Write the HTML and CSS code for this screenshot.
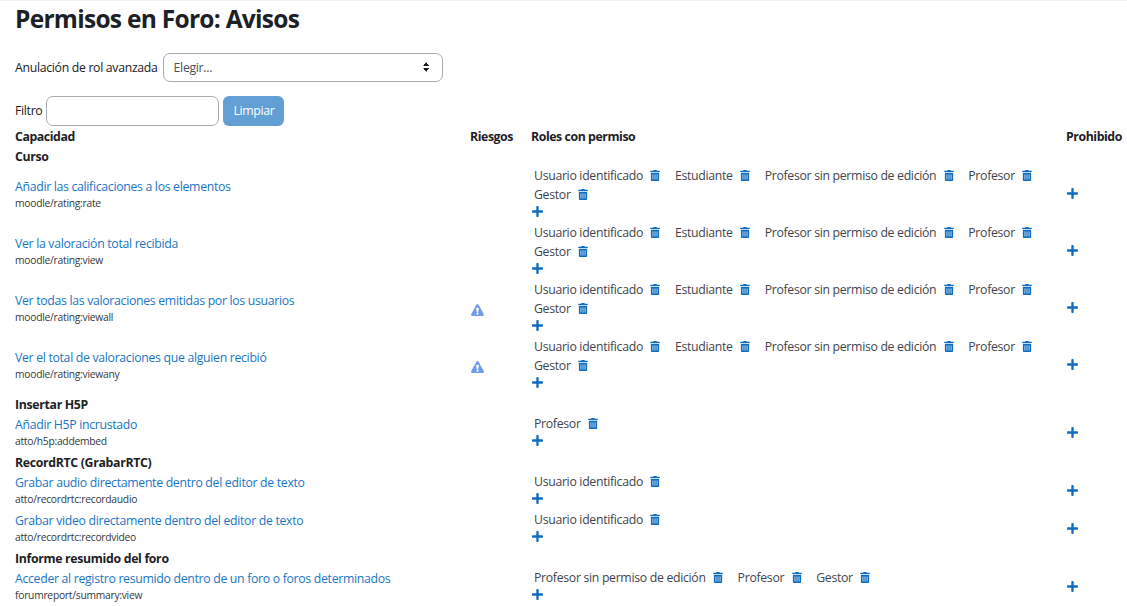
FILE: index.html
```html
<!DOCTYPE html>
<html lang="es">
<head>
<meta charset="utf-8">
<title>Permisos en Foro: Avisos</title>
<link rel="stylesheet" href="styles.css">
</head>
<body>
<svg class="defs" width="0" height="0" aria-hidden="true">
  <symbol id="i-trash" viewBox="0 0 448 512"><path d="M32 464a48 48 0 0 0 48 48h288a48 48 0 0 0 48-48V128H32zm272-256a16 16 0 0 1 32 0v224a16 16 0 0 1-32 0zm-96 0a16 16 0 0 1 32 0v224a16 16 0 0 1-32 0zm-96 0a16 16 0 0 1 32 0v224a16 16 0 0 1-32 0zM432 32H312l-9.4-18.7A24 24 0 0 0 281.1 0H166.8a23.72 23.72 0 0 0-21.4 13.3L136 32H16A16 16 0 0 0 0 48v32a16 16 0 0 0 16 16h416a16 16 0 0 0 16-16V48a16 16 0 0 0-16-16z"/></symbol>
  <symbol id="i-plus" viewBox="0 0 448 512"><path d="M416 208H272V64c0-17.67-14.33-32-32-32h-32c-17.67 0-32 14.33-32 32v144H32c-17.67 0-32 14.33-32 32v32c0 17.67 14.33 32 32 32h144v144c0 17.67 14.33 32 32 32h32c17.67 0 32-14.33 32-32V304h144c17.67 0 32-14.33 32-32v-32c0-17.67-14.33-32-32-32z"/></symbol>
  <symbol id="i-risk" viewBox="0 0 24 22"><path fill-rule="evenodd" d="M12 0c.8 0 1.400.4 1.800 1l9.900 18c.7 1.300-.1 3-1.800 3H2.100C.4 22-.4 20.300.3 19l9.900-18C10.600.4 11.200 0 12 0zM9.500 8.500l1.200 6.500h2.600l1.200-6.500c.1-.8-.5-1.500-1.300-1.500h-2.400c-.8 0-1.400.7-1.300 1.500zM12 15.800a1.900 1.900 0 1 0 0 3.800 1.900 1.900 0 0 0 0-3.800z"/></symbol>
</svg>
<main class="page">
  <h1 class="title">Permisos en Foro: Avisos</h1>
  <form class="override">
    <label class="override-label">Anulación de rol avanzada</label>
    <div class="select"><span class="select-text">Elegir...</span><span class="carets"></span></div>
  </form>
  <div class="filter">
    <label class="filter-label">Filtro</label>
    <div class="filter-input"></div>
    <button class="btn" type="button">Limpiar</button>
  </div>
  <table class="caps">
    <colgroup><col class="c1"><col class="c2"><col class="c3"><col class="c4"></colgroup>
    <thead>
      <tr class="head"><th>Capacidad</th><th>Riesgos</th><th>Roles con permiso</th><th>Prohibido</th></tr>
    </thead>
    <tbody>
      <tr class="group"><td colspan="4">Curso</td></tr>
      <tr class="row-l">
        <td class="cap"><a href="#">Añadir las calificaciones a los elementos</a><small>moodle/rating:rate</small></td>
        <td></td>
        <td><ul class="roles">
          <li>Usuario identificado<svg class="trash"><use href="#i-trash"/></svg></li><li>Estudiante<svg class="trash"><use href="#i-trash"/></svg></li><li>Profesor sin permiso de edición<svg class="trash"><use href="#i-trash"/></svg></li><li>Profesor<svg class="trash"><use href="#i-trash"/></svg></li><li>Gestor<svg class="trash"><use href="#i-trash"/></svg></li>
        </ul><svg class="plus"><use href="#i-plus"/></svg></td>
        <td class="proh"><svg class="plus"><use href="#i-plus"/></svg></td>
      </tr>
      <tr class="row-l">
        <td class="cap"><a href="#">Ver la valoración total recibida</a><small>moodle/rating:view</small></td>
        <td></td>
        <td><ul class="roles">
          <li>Usuario identificado<svg class="trash"><use href="#i-trash"/></svg></li><li>Estudiante<svg class="trash"><use href="#i-trash"/></svg></li><li>Profesor sin permiso de edición<svg class="trash"><use href="#i-trash"/></svg></li><li>Profesor<svg class="trash"><use href="#i-trash"/></svg></li><li>Gestor<svg class="trash"><use href="#i-trash"/></svg></li>
        </ul><svg class="plus"><use href="#i-plus"/></svg></td>
        <td class="proh"><svg class="plus"><use href="#i-plus"/></svg></td>
      </tr>
      <tr class="row-l">
        <td class="cap"><a href="#">Ver todas las valoraciones emitidas por los usuarios</a><small>moodle/rating:viewall</small></td>
        <td class="risk"><svg class="risk-icon"><use href="#i-risk"/></svg></td>
        <td><ul class="roles">
          <li>Usuario identificado<svg class="trash"><use href="#i-trash"/></svg></li><li>Estudiante<svg class="trash"><use href="#i-trash"/></svg></li><li>Profesor sin permiso de edición<svg class="trash"><use href="#i-trash"/></svg></li><li>Profesor<svg class="trash"><use href="#i-trash"/></svg></li><li>Gestor<svg class="trash"><use href="#i-trash"/></svg></li>
        </ul><svg class="plus"><use href="#i-plus"/></svg></td>
        <td class="proh"><svg class="plus"><use href="#i-plus"/></svg></td>
      </tr>
      <tr class="row-l">
        <td class="cap"><a href="#">Ver el total de valoraciones que alguien recibió</a><small>moodle/rating:viewany</small></td>
        <td class="risk"><svg class="risk-icon"><use href="#i-risk"/></svg></td>
        <td><ul class="roles">
          <li>Usuario identificado<svg class="trash"><use href="#i-trash"/></svg></li><li>Estudiante<svg class="trash"><use href="#i-trash"/></svg></li><li>Profesor sin permiso de edición<svg class="trash"><use href="#i-trash"/></svg></li><li>Profesor<svg class="trash"><use href="#i-trash"/></svg></li><li>Gestor<svg class="trash"><use href="#i-trash"/></svg></li>
        </ul><svg class="plus"><use href="#i-plus"/></svg></td>
        <td class="proh"><svg class="plus"><use href="#i-plus"/></svg></td>
      </tr>
      <tr class="group"><td colspan="4">Insertar H5P</td></tr>
      <tr class="row-s">
        <td class="cap"><a href="#">Añadir H5P incrustado</a><small>atto/h5p:addembed</small></td>
        <td></td>
        <td><ul class="roles"><li>Profesor<svg class="trash"><use href="#i-trash"/></svg></li></ul><svg class="plus"><use href="#i-plus"/></svg></td>
        <td class="proh"><svg class="plus"><use href="#i-plus"/></svg></td>
      </tr>
      <tr class="group"><td colspan="4">RecordRTC (GrabarRTC)</td></tr>
      <tr class="row-s">
        <td class="cap"><a href="#">Grabar audio directamente dentro del editor de texto</a><small>atto/recordrtc:recordaudio</small></td>
        <td></td>
        <td><ul class="roles"><li>Usuario identificado<svg class="trash"><use href="#i-trash"/></svg></li></ul><svg class="plus"><use href="#i-plus"/></svg></td>
        <td class="proh"><svg class="plus"><use href="#i-plus"/></svg></td>
      </tr>
      <tr class="row-s">
        <td class="cap"><a href="#">Grabar video directamente dentro del editor de texto</a><small>atto/recordrtc:recordvideo</small></td>
        <td></td>
        <td><ul class="roles"><li>Usuario identificado<svg class="trash"><use href="#i-trash"/></svg></li></ul><svg class="plus"><use href="#i-plus"/></svg></td>
        <td class="proh"><svg class="plus"><use href="#i-plus"/></svg></td>
      </tr>
      <tr class="group"><td colspan="4">Informe resumido del foro</td></tr>
      <tr class="row-s">
        <td class="cap"><a href="#">Acceder al registro resumido dentro de un foro o foros determinados</a><small>forumreport/summary:view</small></td>
        <td></td>
        <td><ul class="roles"><li>Profesor sin permiso de edición<svg class="trash"><use href="#i-trash"/></svg></li><li>Profesor<svg class="trash"><use href="#i-trash"/></svg></li><li>Gestor<svg class="trash"><use href="#i-trash"/></svg></li></ul><svg class="plus"><use href="#i-plus"/></svg></td>
        <td class="proh"><svg class="plus"><use href="#i-plus"/></svg></td>
      </tr>
    </tbody>
  </table>
</main>
</body>
</html>
```
FILE: styles.css
```css
* { box-sizing: border-box; }
html, body { margin: 0; height: 100%; overflow: hidden; }
body {
  background: #fff;
  color: #1d2125;
  font-family: "Open Sans", "Noto Sans", sans-serif;
  font-size: 12.3px;
  line-height: 18px;
  letter-spacing: -0.32px;
  border-top: 1px solid #f2f2f2;
}
.defs { position: absolute; }
.page { padding: 0 0 0 15px; }
.title {
  margin: 0;
  font-size: 24.5px;
  line-height: 36px;
  font-weight: 700;
  letter-spacing: -0.72px;
  height: 52px;
}
.override { display: flex; align-items: center; height: 28px; gap: 5px; }
.override-label, .select-text { position: relative; top: 1px; }
.select {
  width: 280px;
  height: 29px;
  border: 1px solid #a9a9b2;
  border-radius: 7px;
  padding: 0 10px;
  display: flex;
  align-items: center;
  justify-content: space-between;
  color: #495057;
}
.carets {
  width: 7px;
  height: 10px;
  background:
    linear-gradient(to bottom right, transparent 50%, #1d2125 52%) left top / 50% 4px no-repeat,
    linear-gradient(to bottom left, transparent 50%, #1d2125 52%) right top / 50% 4px no-repeat,
    linear-gradient(to top right, transparent 50%, #1d2125 52%) left bottom / 50% 4px no-repeat,
    linear-gradient(to top left, transparent 50%, #1d2125 52%) right bottom / 50% 4px no-repeat;
  margin-right: 2px;
}
.filter { display: flex; align-items: center; margin-top: 15px; height: 30px; }
.filter-label { margin-right: 4px; }
.filter-input {
  width: 173px;
  height: 30px;
  border: 1px solid #a9a9b2;
  border-radius: 7px;
}
.btn {
  margin-left: 4px;
  width: 61px;
  height: 30px;
  border: 0;
  border-radius: 6px;
  background: #629fd5;
  color: #fff;
  font: inherit;
  letter-spacing: inherit;
  padding: 0;
}
.caps {
  margin-left: -15px;
  width: 1127px;
  table-layout: fixed;
  border-collapse: collapse;
}
.c1 { width: 470px; }
.c2 { width: 61px; }
.c3 { width: 535px; }
.c4 { width: 61px; }
th, td { padding: 0; vertical-align: middle; text-align: left; }
th:first-child, td:first-child { padding-left: 15px; }
th { font-weight: 700; white-space: nowrap; letter-spacing: -0.42px; padding-top: 1px; }
.group td { font-weight: 700; padding-top: 1px; }
.head, .group { height: 20px; }
.row-s { height: 38px; }
.row-l { height: 57px; }
.cap a { display: block; color: #1a75c4; text-decoration: none; line-height: 17px; }
.cap small { display: block; font-size: 10.3px; line-height: 17px; letter-spacing: -0.26px; color: #33383d; }
.roles {
  list-style: none;
  margin: 0;
  padding: 0 0 0 3px;
  display: flex;
  flex-wrap: wrap;
  color: #3f454b;
}
.roles li { display: flex; align-items: center; height: 19px; margin-right: 14.5px; }
.trash { width: 10px; height: 11px; margin-left: 7.5px; fill: #0f6cbf; }
.plus { display: block; width: 11px; height: 13px; fill: #0f6cbf; margin-left: 1px; }
.roles + .plus { margin-top: 1px; margin-bottom: 5px; }
.proh { padding-bottom: 2px; }
.risk { padding-top: 2px; }
.risk-icon { display: block; width: 13px; height: 12px; margin-left: 1px; fill: #6f9ce8; }
```
